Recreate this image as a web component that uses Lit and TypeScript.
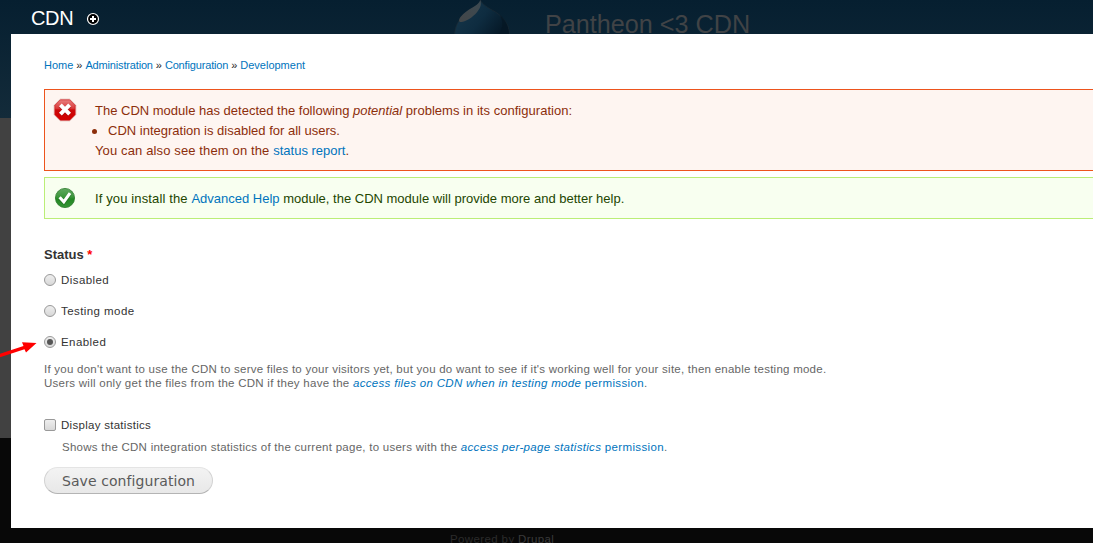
import { LitElement, html, css, svg } from "lit";
import { customElement } from "lit/decorators.js";

const crossIcon = svg`
  <defs>
    <linearGradient id="red" x1="0" y1="0" x2="0" y2="1">
      <stop offset="0" stop-color="#e88080" /><stop offset=".42" stop-color="#d93a3a" />
      <stop offset=".5" stop-color="#cc0808" /><stop offset="1" stop-color="#d40000" />
    </linearGradient>
  </defs>
  <path d="M7 1h10l6 6v10l-6 6H7l-6-6V7z" fill="#fff" stroke="#dcb8b4" stroke-width=".6" />
  <path d="M7.3 1.8h9.4l5.5 5.5v9.4l-5.5 5.5H7.3l-5.5-5.5V7.3z" fill="url(#red)" stroke="#c81414" stroke-width=".7" />
  <path d="M7.4 7.4l9.2 9.4M16.6 7.4l-9.2 9.4" stroke="#8f1010" stroke-opacity=".45" stroke-width="5" />
  <path d="M7.4 6.9l9.2 9.2M16.6 6.9l-9.2 9.2" stroke="#fff" stroke-width="4" />`;

const checkIcon = svg`
  <defs>
    <linearGradient id="green" x1="0" y1="0" x2="0" y2="1">
      <stop offset="0" stop-color="#61a861" /><stop offset=".45" stop-color="#3b963b" />
      <stop offset=".55" stop-color="#238723" /><stop offset="1" stop-color="#359535" />
    </linearGradient>
  </defs>
  <circle cx="12" cy="12" r="9.6" fill="url(#green)" stroke="#2a7a2a" stroke-width=".8" />
  <path d="M6.6 11.8l4.2 4.6 6.200-8.800" fill="none" stroke="#1c611c" stroke-opacity=".5" stroke-width="4" />
  <path d="M6.6 11.3l4.2 4.600 6.200-8.800" fill="none" stroke="#fff" stroke-width="3.1" />`;

@customElement("site-backdrop")
class SiteBackdrop extends LitElement {
  static styles = css`
    :host { display: flex; flex-direction: column; background: #080808; overflow: hidden;
      font-family: "Liberation Sans", Arial, sans-serif; }
    .header { height: 118px; flex: none; display: flex; background: linear-gradient(#061f30, #132b3a); }
    .drop { display: block; margin-left: 453px; flex: none; }
    .name { margin: 9px 0 0 31px; font-size: 25.2px; line-height: 30px; color: #404346; white-space: nowrap; }
    .body { height: 320px; flex: none; background: #414141; }
    .footer { flex: 1; padding: 94px 0 0 450px; font-size: 11.5px; line-height: 14px; color: #2b2b2b;
      letter-spacing: .38px; white-space: nowrap; }
    .brand { color: #3a3a3a; }
  `;
  render() {
    return html`
      <div class="header">
        <svg class="drop" width="61" height="60" viewBox="0 0 61 60">
          <defs>
            <linearGradient id="body" x1="0" y1="0" x2="1" y2=".5">
              <stop offset="0" stop-color="#18384c" /><stop offset=".6" stop-color="#0e2c40" /><stop offset="1" stop-color="#061a29" />
            </linearGradient>
            <linearGradient id="shine" x1="1" y1="0" x2="0" y2="1">
              <stop offset="0" stop-color="#3c4a52" /><stop offset="1" stop-color="#434648" />
            </linearGradient>
          </defs>
          <path d="M27.500 0c1 4 8 8 15 12c10 7 14 14 14 24H1.500C2 25 6 19 13 13c6-5 12-7 14.500-13z" fill="url(#body)" stroke="#1b2a34" stroke-width=".7" />
          <path d="M27.500 0c-1.500 6-13 8-20 17c-2 3-2 5 1 5c6-.500 14-7 17-12c2-3 3-5 2-10z" fill="url(#shine)" />
          <path d="M47 15c4 8 3 15-3 21h12c0-10-3-16-9-21z" fill="#051723" opacity=".7" />
        </svg>
        <div class="name">Pantheon &lt;3 CDN</div>
      </div>
      <div class="body"></div>
      <div class="footer">Powered by <span class="brand">Drupal</span></div>`;
  }
}

@customElement("app-root")
class AppRoot extends LitElement {
  static styles = css`
    :host { display: grid; grid-template: 543px / 1093px; overflow: hidden; width: 1093px; height: 543px;
      font-family: "Liberation Sans", Arial, sans-serif; color: #333; }
    site-backdrop, .overlay { grid-area: 1 / 1; min-width: 0; }
    .overlay { z-index: 1; display: grid; grid-template-rows: 34px 494px; padding-left: 11px; white-space: nowrap; }
    .titlebar { display: flex; align-items: center; padding: 2px 0 0 20px; gap: 13px; color: #fff; }
    .title { font-size: 20px; line-height: 32px; letter-spacing: -.35px; }
    .plus { margin-top: 2px; }
    .panel { background: #fff; padding: 24px 0 0 33px; display: flex; flex-direction: column; }
    a { color: #0074bd; }
    .crumbs { font-size: 11px; line-height: 14px; margin-bottom: 17px; color: #222; word-spacing: -.1px; }
    .tight { letter-spacing: -.16px; }
    .message { border: 1px solid; border-right: 0; display: flex; font-size: 13px; line-height: 20px; box-sizing: border-box; }
    .message svg { flex: none; margin: 8px 18px 0 8px; }
    .error { height: 82px; border-color: #ed541d; background: #fef5f1; color: #8c2e0b; }
    .ok { height: 42px; border-color: #be7; background: #f8fff0; color: #234600; margin-top: 6px; }
    .copy { padding-top: 11px; }
    .loose { letter-spacing: .13px; }
    .after { letter-spacing: .03px; }
    .item { display: flex; align-items: center; gap: 11px; margin-left: -3px; }
    .item::before { content: ""; width: 5px; height: 5px; border-radius: 50%; background: #8c2e0b; }
    .legend { font-size: 13px; font-weight: bold; line-height: 16px; margin: 28px 0 10px; }
    .required { color: #f00; }
    .option { display: flex; align-items: center; height: 14px; gap: 5px; font-size: 11.5px; letter-spacing: .43px; margin-bottom: 17px; }
    .radio, .check { box-sizing: border-box; width: 12px; height: 12px; border: 1px solid #999; flex: none;
      background: linear-gradient(#eee, #d8d8d8); }
    .radio { border-radius: 50%; display: grid; place-items: center; }
    .check { border-radius: 2px; }
    .dot { width: 6px; height: 6px; border-radius: 50%; background: #555; }
    .help { font-size: 11.5px; line-height: 14px; letter-spacing: .26px; color: #666; }
    .help em { letter-spacing: .32px; }
    .help a { letter-spacing: .36px; }
    .intro { letter-spacing: .245px; }
    .status { margin-top: -4px; margin-bottom: 28px; }
    .option.stats { margin-bottom: 8px; letter-spacing: .28px; }
    .indent { margin-left: 18px; }
    .save { box-sizing: border-box; width: 169px; height: 27px; margin-top: 13px; display: grid; place-items: center;
      font: 14px/20px "DejaVu Sans", sans-serif; letter-spacing: .08px; color: #5a5a5a; border: 1px solid #e4e4e4; border-bottom-color: #b4b4b4;
      border-left-color: #d2d2d2; border-right-color: #d2d2d2; border-radius: 14px; background: linear-gradient(#f3f3f3, #e8e8e8); }
    .arrow { grid-area: 1 / 1; z-index: 2; margin-top: 338px; }
  `;
  render() {
    return html`
      <site-backdrop></site-backdrop>
      <div class="overlay">
        <div class="titlebar">
          <div class="title">CDN</div>
          <svg class="plus" width="14" height="14" viewBox="0 0 14 14">
            <circle cx="7" cy="7" r="5.500" fill="#000" stroke="#fff" stroke-width="1.200" />
            <path d="M4 7h6M7 4v6" stroke="#fff" stroke-width="2" />
          </svg>
        </div>
        <main class="panel">
          <nav class="crumbs"><a>Home</a> » <a class="tight">Administration</a> » <a class="tight">Configuration</a> » <a>Development</a></nav>
          <section class="message error">
            <svg width="24" height="24" viewBox="0 0 24 24">${crossIcon}</svg>
            <div class="copy">
              <div class="first">The CDN module has detected the following <em>potential</em> <span class="after">problems in its configuration:</span></div>
              <div class="item"><span>CDN integration is disabled for all users.</span></div>
              <div><span class="loose">You can also see them on the </span><a>status report</a>.</div>
            </div>
          </section>
          <section class="message ok">
            <svg width="24" height="24" viewBox="0 0 24 24">${checkIcon}</svg>
            <div class="copy"><span class="loose">If you install the </span><a>Advanced Help</a> module, the CDN module will provide more and better help.</div>
          </section>
          <div class="legend">Status <span class="required">*</span></div>
          <div class="option"><span class="radio"></span><span>Disabled</span></div>
          <div class="option"><span class="radio"></span><span>Testing mode</span></div>
          <div class="option"><span class="radio"><span class="dot"></span></span><span>Enabled</span></div>
          <div class="help status">
            <div class="intro">If you don't want to use the CDN to serve files to your visitors yet, but you do want to see if it's working well for your site, then enable testing mode.</div>
            <div>Users will only get the files from the CDN if they have the <a><em>access files on CDN when in testing mode</em> permission</a>.</div>
          </div>
          <div class="option stats"><span class="check"></span><span>Display statistics</span></div>
          <div class="help indent">Shows the CDN integration statistics of the current page, to users with the <a><em>access per-page statistics</em> permission</a>.</div>
          <div class="save">Save configuration</div>
        </main>
      </div>
      <svg class="arrow" width="40" height="24" viewBox="0 0 40 24">
        <path d="M0 15.800L23.500 7.900L22 4.200L36.500 5L26 14.500L24.500 11.200L0 19.200z" fill="#f00" />
      </svg>`;
  }
}
